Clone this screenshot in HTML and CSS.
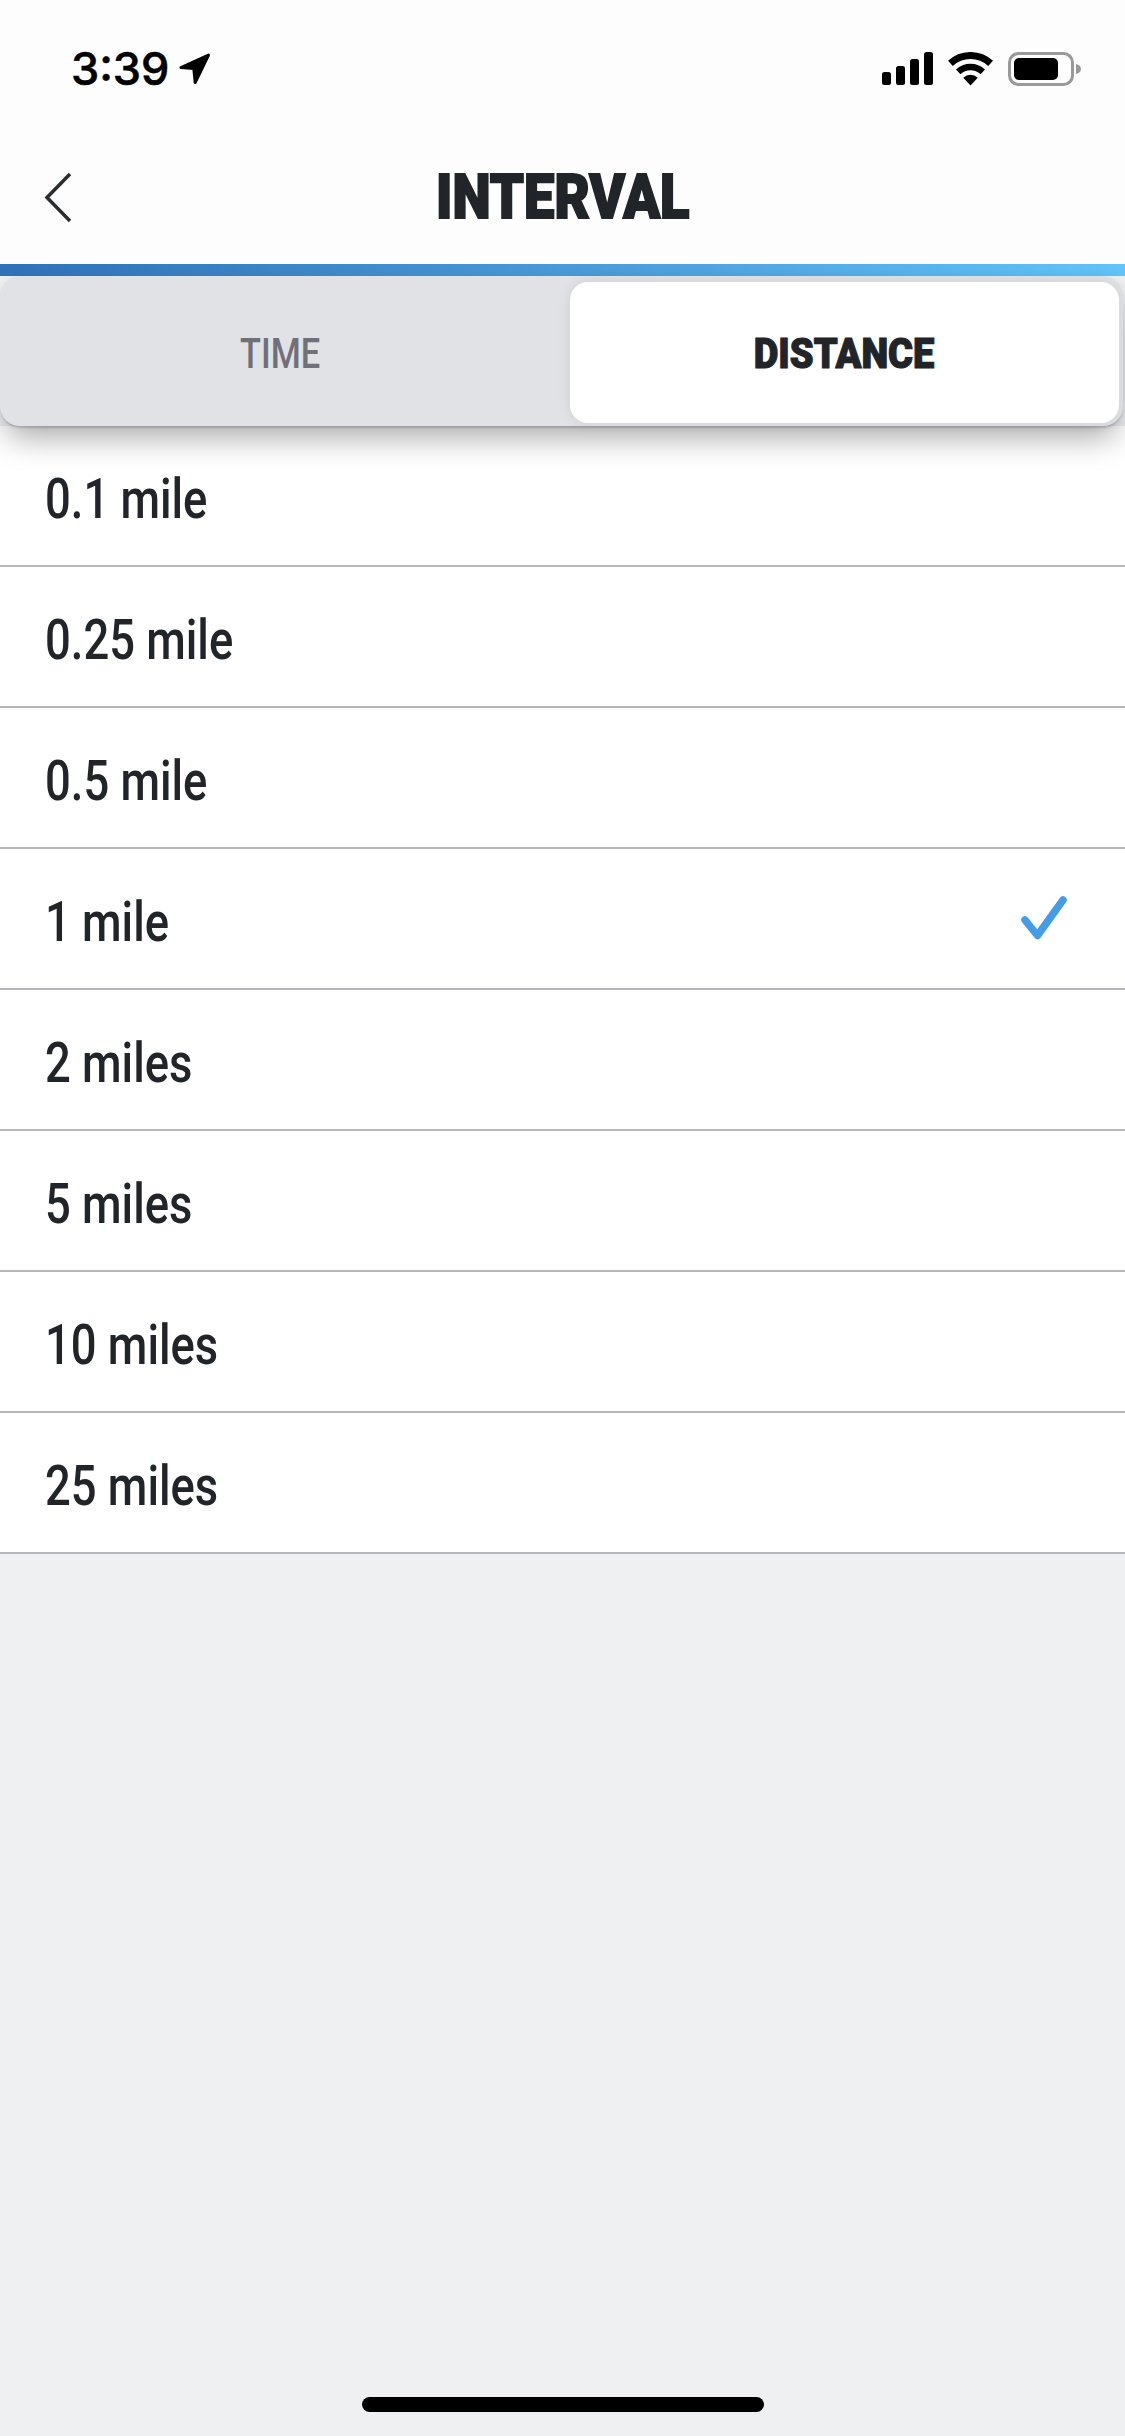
FILE: index.html
```html
<!DOCTYPE html>
<html lang="en">
<head>
<meta charset="utf-8">
<title>Interval</title>
<link rel="stylesheet" href="styles.css">
</head>
<body>
<div class="screen">
  <header class="top">
    <div class="status">
      <div class="status-left">
        <span class="clock">3:39</span>
        <svg class="arrow" viewBox="0 0 32 32"><path d="M29.5 2 2 14.6 14.8 15.6 16.2 29.5Z" fill="#000" stroke="#000" stroke-width="3" stroke-linejoin="round"/></svg>
      </div>
      <div class="status-right">
        <svg class="signal" viewBox="0 0 52 33"><rect x="0" y="20" width="9" height="13" rx="2.5"/><rect x="14" y="14" width="9" height="19" rx="2.5"/><rect x="28" y="7" width="9" height="26" rx="2.5"/><rect x="42" y="0" width="9" height="33" rx="2.5"/></svg>
        <svg class="wifi" viewBox="0 0 46 34"><path d="M2.4 11.4A29.5 29.5 0 0 1 42.6 11.4" fill="none" stroke="#000" stroke-width="7"/><path d="M10.2 19.8A18 18 0 0 1 34.8 19.8" fill="none" stroke="#000" stroke-width="6.5"/><path d="M22.5 33.5 15.3 25.7A10.5 10.5 0 0 1 29.7 25.7Z"/></svg>
        <svg class="battery" viewBox="0 0 74 34"><rect x="1.5" y="1.5" width="63" height="31" rx="9" fill="none" stroke="#999" stroke-width="3"/><rect x="6" y="6" width="44" height="22" rx="5"/><path d="M68 12C71 12.5 73 14.5 73 17S71 21.500 68 22Z" fill="#999"/></svg>
      </div>
    </div>
    <nav class="nav">
      <svg class="back" viewBox="0 0 28 52"><path d="M26 2 3 25.500 26 49" fill="none" stroke="#2a2d30" stroke-width="3.500"/></svg>
      <h1 class="title"><span>INTERVAL</span></h1>
    </nav>
    <div class="rule"></div>
  </header>

  <div class="segmented">
    <div class="seg seg-off"><span>TIME</span></div>
    <div class="seg seg-on"><span>DISTANCE</span></div>
  </div>

  <ul class="list">
    <li class="row"><span class="label">0.1 mile</span></li>
    <li class="row"><span class="label">0.25 mile</span></li>
    <li class="row"><span class="label">0.5 mile</span></li>
    <li class="row"><span class="label">1 mile</span>
      <svg class="check" viewBox="0 0 50 50"><path d="M7 26 19.500 41.500 45 6" fill="none" stroke="#449ce6" stroke-width="7.500" stroke-linecap="round" stroke-linejoin="round"/></svg>
    </li>
    <li class="row"><span class="label">2 miles</span></li>
    <li class="row"><span class="label">5 miles</span></li>
    <li class="row"><span class="label">10 miles</span></li>
    <li class="row"><span class="label">25 miles</span></li>
  </ul>

  <div class="home"></div>
</div>
</body>
</html>
```
FILE: styles.css
```css
* { box-sizing: border-box; }
html, body { margin: 0; padding: 0; }
body { background: #eff0f2; font-family: Roboto, "Liberation Sans", sans-serif; }
.screen { width: 1125px; height: 2436px; display: flex; flex-direction: column; background: #eff0f2; overflow: hidden; }

.top { background: #fdfdfd; }
.status { height: 137px; display: flex; justify-content: space-between; align-items: center; padding: 0 43px 0 71px; }
.status-left { display: flex; align-items: center; gap: 10px; }
.clock { font-family: Inter, sans-serif; font-weight: 500; font-size: 45px; line-height: 46px; color: #000; -webkit-text-stroke: .6px #000; }
.arrow { width: 32px; height: 32px; display: block; }
.status-right { display: flex; align-items: center; gap: 14px; }
.signal { width: 52px; height: 33px; display: block; }
.wifi { width: 46px; height: 34px; display: block; }
.battery { width: 74px; height: 34px; display: block; }

.nav { height: 127px; position: relative; display: flex; align-items: center; justify-content: center; padding-bottom: 7px; }
.back { position: absolute; left: 44px; top: 35px; width: 28px; height: 52px; }
.title { margin: 0; font-size: 62px; line-height: 62px; font-weight: 900; color: #212529; -webkit-text-stroke: 2px #212529; }
.title span { display: inline-block; transform: scaleX(.875); }
.rule { height: 12px; background: linear-gradient(90deg, #3072ba 0%, #62c4f9 100%); }

.segmented { position: relative; z-index: 2; height: 150px; width: 1123px; margin-right: 2px; padding: 6px 4px 3px 0; display: flex; background: #e1e2e6; border-radius: 20px; box-shadow: 0 16px 32px -6px rgba(0,0,0,.36), 0 3px 2px -1px rgba(0,0,0,.16); }
.seg { display: flex; align-items: center; justify-content: center; padding-top: 2px; font-size: 43px; line-height: 43px; }
.seg span { display: inline-block; }
.seg-off { width: 570px; padding-right: 9px; color: #6f7079; font-weight: 500; }
.seg-off span { transform: scaleX(.8); }
.seg-on { flex: 1; background: #fff; border-radius: 18px; color: #212529; font-weight: 900; box-shadow: 0 0 14px rgba(0,0,0,.08); -webkit-text-stroke: 1.2px #212529; }
.seg-on span { transform: scaleX(.885); }

.list { list-style: none; margin: 0; padding: 0; background: #fff; }
.row { height: 141px; display: flex; align-items: center; justify-content: space-between; padding: 7px 57px 0 45px; border-bottom: 2px solid #b6b7bb; }
.label { display: inline-block; font-size: 55px; line-height: 60px; font-weight: 500; color: #212529; transform: scaleX(.825); transform-origin: left center; }
.check { width: 50px; height: 50px; display: block; margin-top: -7px; }

.home { position: absolute; left: 362px; top: 2397px; width: 402px; height: 15px; background: #000; border-radius: 8px; }
```
